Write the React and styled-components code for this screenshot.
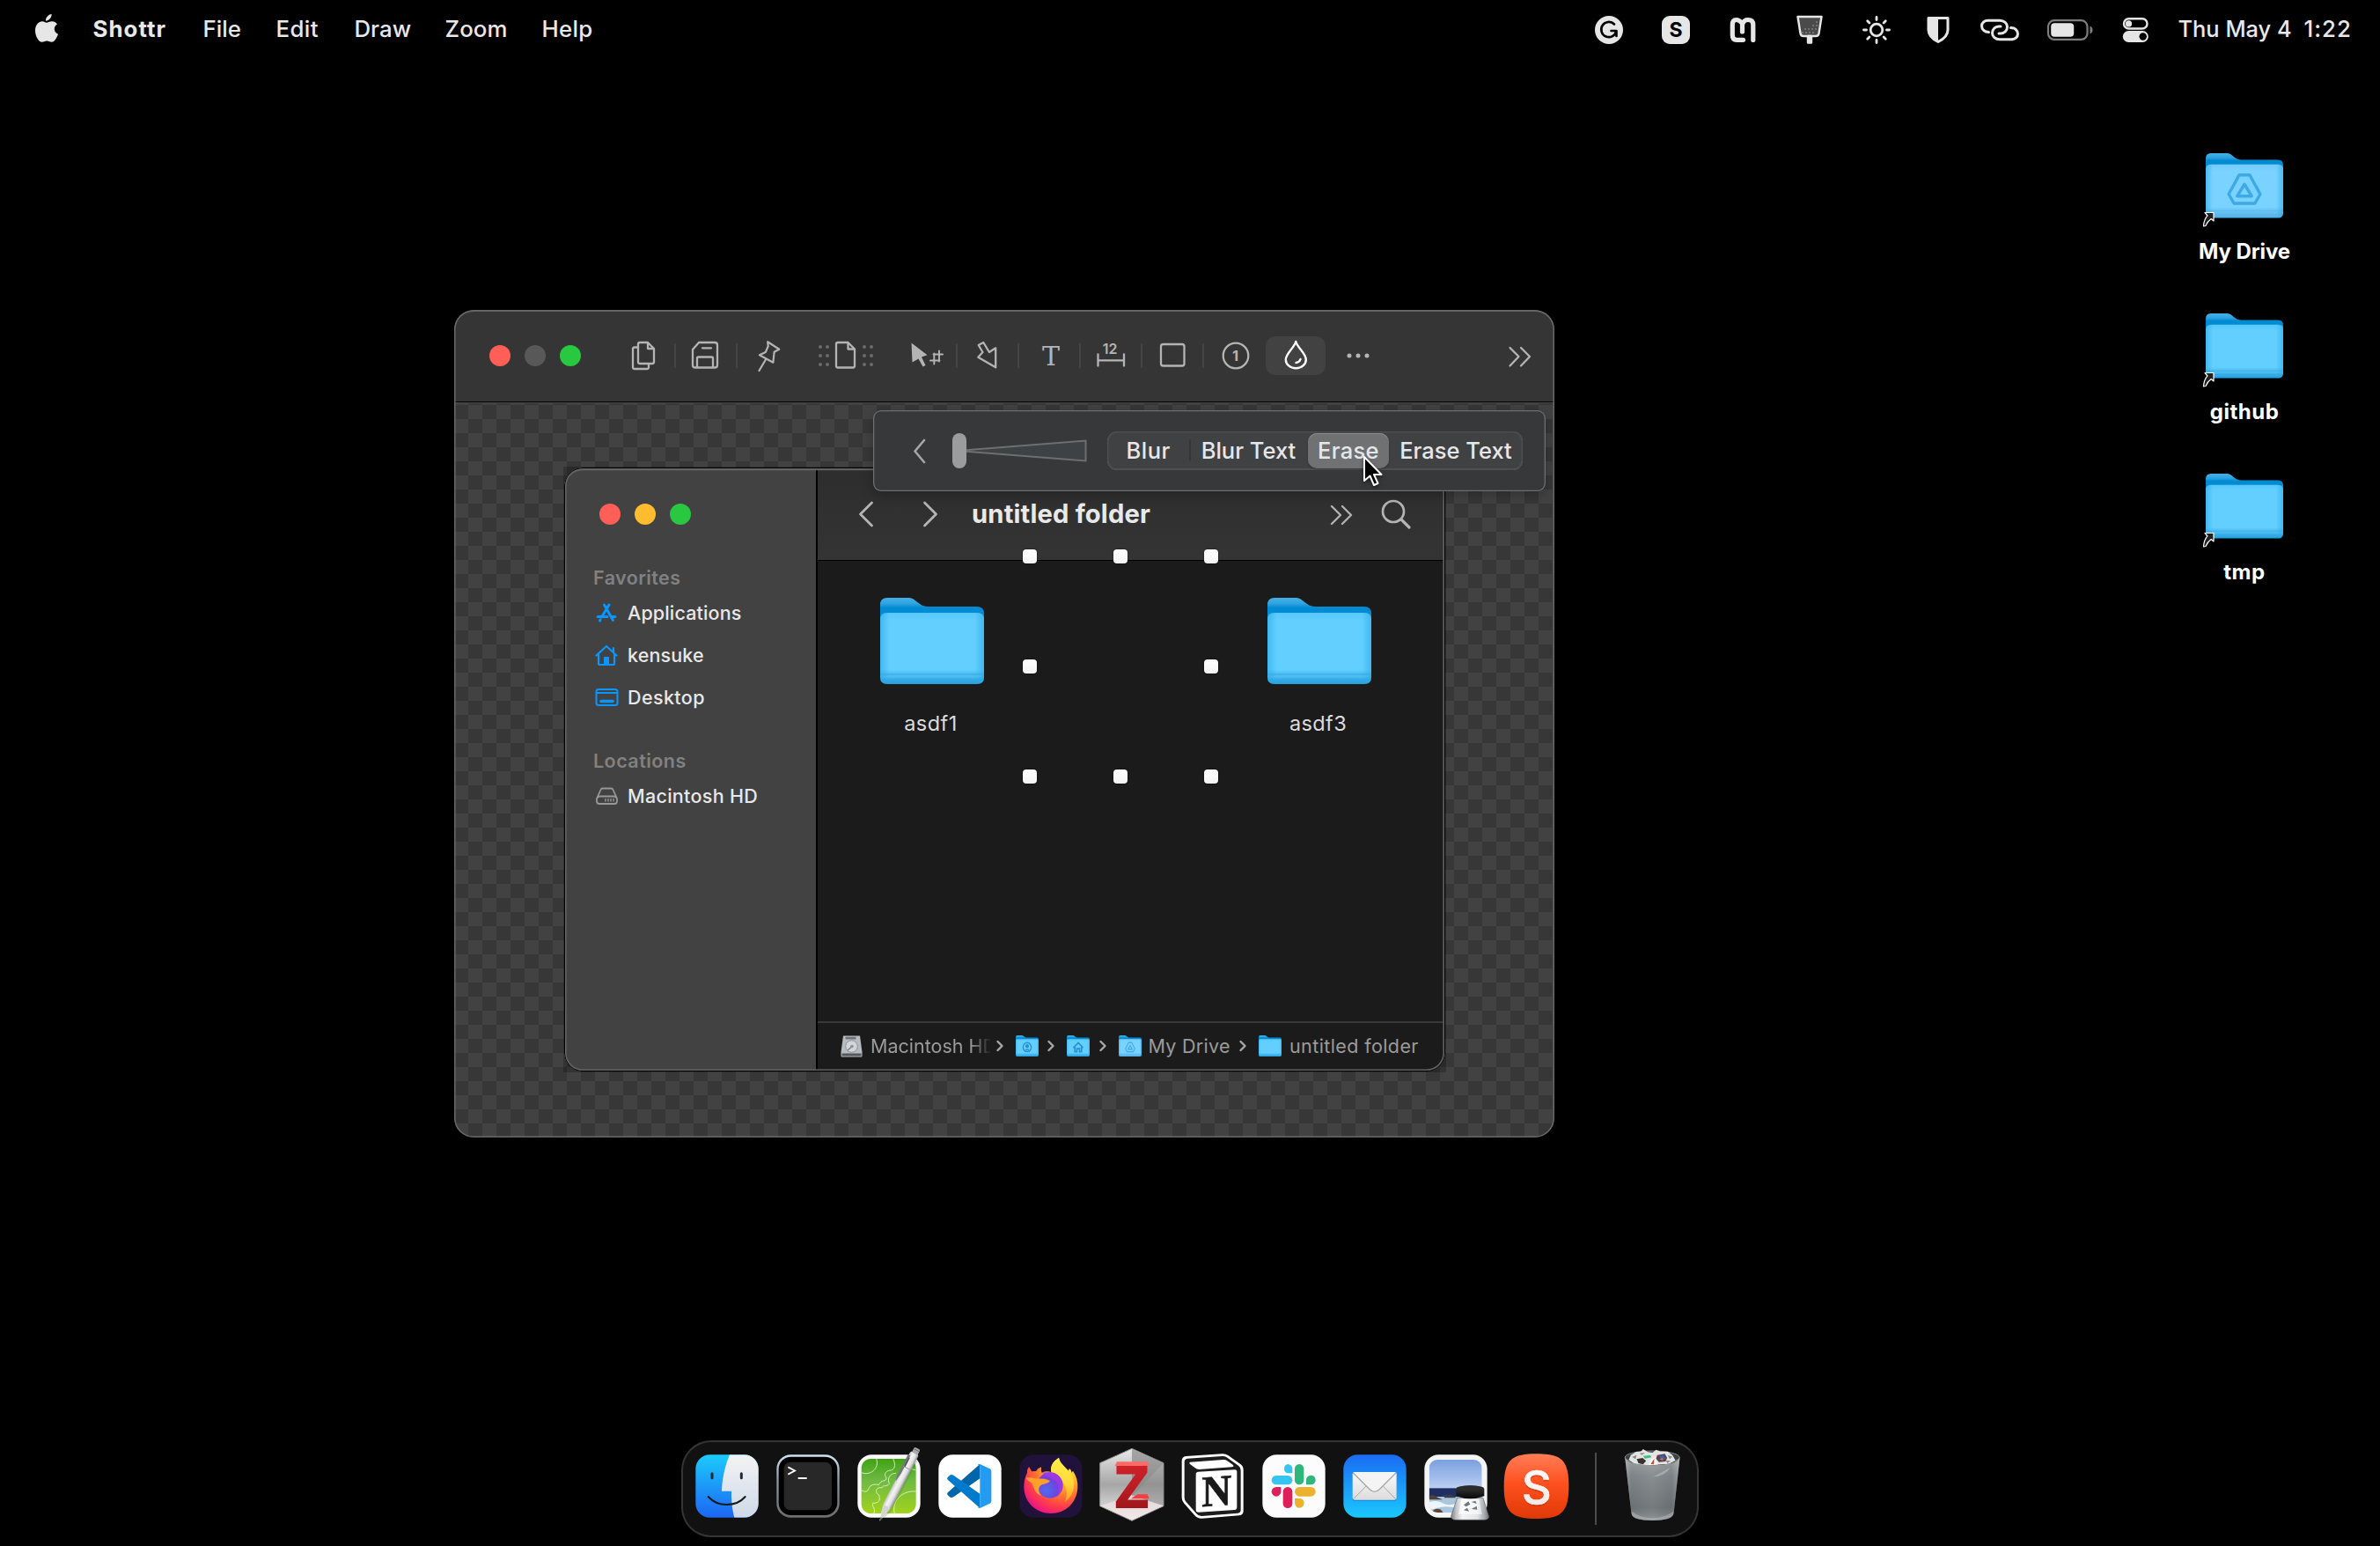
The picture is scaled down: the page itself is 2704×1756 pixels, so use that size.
import React from "react";
import styled, { createGlobalStyle, css } from "styled-components";

const Global = createGlobalStyle`
  * { box-sizing: border-box; }
  html, body { margin: 0; background: #000; }
  body { font-family: Inter, "Liberation Sans", sans-serif; overflow: hidden; }
  svg { display: block; flex: none; overflow: visible; }
`;

/* ---------- shared ---------- */

const Text = styled.span`
  display: block;
  flex: none;
  white-space: nowrap;
  color: ${(p) => p.$color || "#e8e8e8"};
  font-size: ${(p) => p.$size || 25.8}px;
  font-weight: ${(p) => p.$weight || 400};
  letter-spacing: ${(p) => p.$ls || 0}px;
`;

const Icon = styled.svg`
  width: ${(p) => p.$w || 40}px;
  height: ${(p) => p.$h || 40}px;
  margin-left: ${(p) => p.$ml || 0}px;
  fill: none;
  stroke: ${(p) => p.$c || "#b4b4b4"};
  stroke-width: ${(p) => p.$sw || 2.3};
  stroke-linecap: round;
  stroke-linejoin: round;
  text { stroke: none; fill: ${(p) => p.$c || "#b4b4b4"}; font-family: Inter, sans-serif; }
`;

const Light = styled.span`
  width: 24px;
  height: 24px;
  border-radius: 50%;
  background: ${(p) => p.$c};
`;

const Lights = styled.div`
  display: flex;
  gap: 16px;
`;

/* ---------- folder drawing ---------- */

const Folder = ({ w = 118, h = 98, emblem, id, light }) => (
  <svg width={w} height={h} viewBox="0 0 118 98" preserveAspectRatio="none">
    <defs>
      <linearGradient id={`b${id}`} x1="0" y1="0" x2="0" y2="1">
        <stop offset="0" stopColor="#45b0e8" />
        <stop offset="0.11" stopColor="#2fa3e0" />
        <stop offset="0.19" stopColor="#008ad2" />
        <stop offset="1" stopColor="#1a9de0" />
      </linearGradient>
      <linearGradient id={`f${id}`} x1="0" y1="0" x2="0" y2="1">
        <stop offset="0" stopColor={light ? "#74cbf9" : "#58c8fb"} />
        <stop offset="0.12" stopColor={light ? "#79d2ff" : "#62cfff"} />
        <stop offset="0.8" stopColor={light ? "#79d2ff" : "#62cfff"} />
        <stop offset="0.85" stopColor={light ? "#6cc6f5" : "#4fbff3"} />
        <stop offset="0.86" stopColor={light ? "#5fb9ec" : "#3fb2ea"} />
        <stop offset="0.89" stopColor={light ? "#6cc4f3" : "#52bff1"} />
        <stop offset="0.93" stopColor={light ? "#5cb9ee" : "#36ade8"} />
        <stop offset="1" stopColor={light ? "#52b3ea" : "#22a1e0"} />
      </linearGradient>
      <linearGradient id={`e${id}`} x1="0" y1="0" x2="1" y2="0">
        <stop offset="0" stopColor="#2ba9e6" stopOpacity="0.6" />
        <stop offset="0.09" stopColor="#2ba9e6" stopOpacity="0" />
        <stop offset="0.91" stopColor="#2ba9e6" stopOpacity="0" />
        <stop offset="1" stopColor="#2ba9e6" stopOpacity="0.6" />
      </linearGradient>
    </defs>
    <path d="M0 8Q0 0 8 0H33C40 0 44 10 54 10H110Q118 10 118 18V60H0Z" fill={`url(#b${id})`} />
    <path d="M0 25Q0 17 8 17H110Q118 17 118 25V90Q118 98 110 98H8Q0 98 0 90Z" fill={`url(#f${id})`} />
    <path d="M0 25Q0 17 8 17H110Q118 17 118 25V90Q118 98 110 98H8Q0 98 0 90Z" fill={`url(#e${id})`} />
    {emblem === "drive" && (
      <g fill="none" stroke="#3ea9e3" strokeWidth="4.6" strokeLinejoin="round">
        <path d="M51 33H67L83 62L75 76H43L35 62Z" />
        <path d="M59 47L70 65H48Z" />
      </g>
    )}
    {emblem === "person" && (
      <g fill="none" stroke="#2a8fcb" strokeWidth="6">
        <circle cx="59" cy="55" r="21" />
        <circle cx="59" cy="50" r="6" fill="#2a8fcb" />
        <path d="M50 67H68" />
      </g>
    )}
    {emblem === "home" && (
      <g fill="none" stroke="#2a8fcb" strokeWidth="7">
        <path d="M34 58L59 34L84 58M42 54V76H52V62H66V76H76V54" />
      </g>
    )}
  </svg>
);

/* ---------- menu bar ---------- */

const MenuBar = styled.header`
  display: flex;
  align-items: center;
  height: 68px;
  padding: 0 32px 0 38px;
`;

const MenuItem = styled(Text)`
  width: ${(p) => p.$w}px;
  padding-bottom: 3px;
`;

const Gap = styled.i`
  flex: none;
  width: ${(p) => p.$w}px;
`;

const Status = styled.div`
  display: flex;
  align-items: center;
  margin-left: auto;
`;

const W = "#e6e6e6";
const S = (p) => <Icon $w={44} $h={40} viewBox="0 0 44 40" $c={W} $sw={2.6} {...p} />;

const MENUS = [
  ["Shottr", 125, 700, 1.05],
  ["File", 83, 500, 0],
  ["Edit", 89, 500, 0.4],
  ["Draw", 103, 500, 0],
  ["Zoom", 110, 500, 0.1],
  ["Help", 70, 500, 0.3],
];

const TopBar = () => (
  <MenuBar>
    <Icon $w={30} $h={40} viewBox="0 0 30 40" $c="none">
      <path
        fill={W}
        d="M20.6 2C20.8 6 17.500 9.700 14 9.700C13.600 6.200 17 2.300 20.600 2ZM14.800 11.800C16.300 11.800 18.300 10.300 21 10.300C23.500 10.300 25.600 11.500 26.900 13.400C22.200 16.300 23 22.700 28 24.700C27 28 24 33.800 20.800 33.800C18.800 33.800 17.800 32.500 15.300 32.500C12.700 32.500 11.700 33.800 9.700 33.800C5.800 33.800 2 26.700 2 20.700C2 14 6.200 10.300 10 10.300C12 10.300 13.600 11.800 14.800 11.800Z"
      />
    </Icon>
    <Gap $w={37.5} />
    {MENUS.map(([t, w, wt, ls]) => (
      <MenuItem key={t} $w={w} $weight={wt} $ls={ls}>
        {t}
      </MenuItem>
    ))}
    <Status>
      <S>
        <circle cx="22" cy="20" r="16" fill={W} stroke="none" />
        <path d="M28 13.500A8.600 8.600 0 1 0 30.300 21H24.500M30.500 21V27" stroke="#000" />
      </S>
      <S $ml={32}>
        <rect x="6" y="4" width="32" height="32" rx="9" fill={W} stroke="none" />
        <text x="22" y="28" fontSize="23" fontWeight="700" textAnchor="middle" style={{ fill: "#000" }}>
          S
        </text>
      </S>
      <S $ml={32} $sw={5.2}>
        <path d="M22.500 31.300H15Q10.300 31.300 10.300 26V14Q10.300 8.500 14.500 8.500Q18 8.500 21.500 12.500V22M22 12.500Q23.500 8.500 28 8.500Q33.800 8.500 33.800 14V31.500" />
      </S>
      <S $ml={32} $sw={2.4}>
        <path d="M8.500 5H35.500L32.500 24Q32 27 29 27H15Q12 27 11.500 24Z" fill="#4a4a4a" />
        <path d="M20 27H24V34.500H20Z" fill={W} />
        <path d="M14 23h.1M18 23h.1M22 23h.1M26 23h.1M17 19h.1M21 19h.1M25 19h.1M29 19h.1M26 15h.1M30 15h.1M30 11h.1" stroke="#a8a8a8" strokeWidth="1.500" />
      </S>
      <S $ml={32} $sw={2.8}>
        <circle cx="22" cy="20" r="6.800" />
        <path d="M22 5.500V8.500M22 31.500V34.500M7.500 20H10.500M33.500 20H36.500M11.700 9.700L13.900 11.900M30.100 28.100L32.300 30.300M11.700 30.300L13.900 28.100M30.100 11.900L32.300 9.700" />
      </S>
      <S $ml={26} $sw={3}>
        <path d="M11 6.500H33V20Q33 28 22 33.500Q11 28 11 20Z" />
        <path d="M11 6.500H22V33.500Q11 28 11 20Z" fill={W} stroke="none" />
      </S>
      <S $ml={26} $sw={3}>
        <path d="M9.500 22.500C4.500 22.500 1.500 19 1.500 15.500C1.500 12 4.500 9.200 8.500 9.200H22C27 9.200 30.500 12.500 30.500 16.500C30.500 20.500 27.500 24 23 24H21" />
        <path d="M34.500 17.500C39.500 17.500 42.500 21 42.500 24.500C42.500 28 39.500 30.800 35.500 30.800H22C17 30.800 13.500 27.500 13.500 23.500C13.500 19.500 16.500 16 21 16H23" />
      </S>
      <Icon $w={54} $ml={31} viewBox="0 0 54 40" $c="#7d7d7d" $sw={2.2}>
        <rect x="2" y="9.200" width="44.500" height="21.700" rx="7" />
        <rect x="5.200" y="12.300" width="26" height="15.500" rx="4" fill={W} stroke="none" />
        <path d="M49.500 15.500Q52.500 17 52.500 20T49.500 24.500Z" fill="#7d7d7d" stroke="none" />
      </Icon>
      <S $ml={25} $sw={2.4}>
        <rect x="9" y="7.300" width="26.500" height="11.200" rx="5.600" />
        <circle cx="14.500" cy="12.900" r="3.600" fill={W} stroke="none" />
        <rect x="7.800" y="21" width="29" height="13" rx="6.500" fill={W} stroke="none" />
        <circle cx="30.700" cy="27.500" r="4.200" fill="#000" stroke="none" />
      </S>
      <Gap $w={26.5} />
      <MenuItem $w={143} $size={25.4} $weight={500}>
        Thu May 4
      </MenuItem>
      <MenuItem $w={54.5} $size={25.8} $ls={1} $weight={500}>
        1:22
      </MenuItem>
    </Status>
  </MenuBar>
);

/* ---------- desktop ---------- */

const Desktop = styled.div`
  position: relative;
  width: 2704px;
  height: 1756px;
  overflow: hidden;
  background: #000;
  display: flex;
  flex-direction: column;
`;

const Shortcuts = styled.div`
  display: flex;
  flex-direction: column;
  align-self: flex-end;
  width: 180px;
  margin: 105.500px 64px 0 0;
`;

const Shortcut = styled.div`
  position: relative;
  height: 182px;
  display: flex;
  flex-direction: column;
  align-items: center;
  gap: 22.500px;
`;

const AliasBadge = styled.svg`
  position: absolute;
  left: 42px;
  top: 66px;
`;

const ShortcutLabel = styled(Text)`
  line-height: 32px;
  color: #fff;
`;

const SHORTCUTS = [
  ["My Drive", "drive", -0.1],
  ["github", null, 0.5],
  ["tmp", null, 0.5],
];

/* ---------- editor window ---------- */

const Editor = styled.section`
  position: absolute;
  left: 516px;
  top: 352px;
  width: 1250px;
  height: 940px;
  border-radius: 22px;
  overflow: hidden;
  display: flex;
  flex-direction: column;
  &::after {
    content: "";
    position: absolute;
    inset: 0;
    border-radius: 22px;
    box-shadow: inset 0 0 0 1.500px #696969, inset 0 1px 0 1px rgba(130, 130, 130, 0.5);
    pointer-events: none;
  }
`;

const Toolbar = styled.div`
  flex: none;
  height: 105px;
  padding: 0 19px 1px 40px;
  display: flex;
  align-items: center;
  background: #353535;
  border-bottom: 1px solid #000;
`;

const Sep = styled.i`
  flex: none;
  width: 2px;
  height: 28px;
  margin-left: ${(p) => p.$ml}px;
  background: #444;
`;

const ActiveTool = styled.div`
  flex: none;
  width: 68px;
  height: 44px;
  margin-left: 14px;
  border-radius: 11px;
  background: #424242;
  display: flex;
  align-items: center;
  justify-content: center;
`;

const Spring = styled.div`
  flex: 1;
`;

const Canvas = styled.div`
  flex: 1;
  padding: 72px 0 0 124px;
  border-top: 1px solid #4a4a4a;
  background: conic-gradient(#424242 25%, #373737 0 50%, #424242 0 75%, #373737 0) 0 2px / 32px 32px;
`;

const Popover = styled.div`
  position: absolute;
  left: 476px;
  top: 114px;
  width: 764px;
  height: 92px;
  padding: 0 26px 0 42px;
  border-radius: 9px;
  background: #37383a;
  box-shadow: inset 0 0 0 1.300px #6c6e70, 0 4px 14px rgba(0, 0, 0, 0.25);
  display: flex;
  align-items: center;
`;

const Segments = styled.div`
  display: flex;
  align-items: center;
  width: 472px;
  height: 44px;
  margin-left: 22px;
  border-radius: 11px;
  background: #404143;
  box-shadow: inset 0 0 0 1.500px #4d4e50, inset 0 -1px 0 0.500px #6a6b6d;
`;

const Segment = styled.div`
  width: ${(p) => p.$w}px;
  height: 40px;
  padding-bottom: 2px;
  border-radius: 10px;
  display: flex;
  align-items: center;
  justify-content: center;
  ${(p) => p.$on && css`
    background: #707173;
    box-shadow: inset 0 1px 0 #8b8c8e, 0 1px 2px rgba(0, 0, 0, 0.3);
  `}
  ${(p) => p.$rule && css`
    justify-content: space-between;
    padding-left: 21.500px;
    &::after {
      content: "";
      width: 2px;
      height: 24px;
      margin-right: -2px;
      background: #353638;
    }
  `}
`;

const Pointer = styled.svg`
  position: absolute;
  left: 1032px;
  top: 164px;
  filter: drop-shadow(0 2px 2px rgba(0, 0, 0, 0.5));
`;

const SEGMENTS = [
  ["Blur", 93, false, true, 0.5],
  ["Blur Text", 135, false, false, 0],
  ["Erase", 92, true, false, 0.3],
  ["Erase Text", 152, false, false, 0],
];

/* ---------- captured finder window ---------- */

const Capture = styled.div`
  width: 1003px;
  height: 688px;
  padding: 1px;
  background: rgba(0, 0, 0, 0.22);
`;

const Finder = styled.div`
  position: relative;
  width: 1001px;
  height: 686px;
  border-radius: 21px;
  overflow: hidden;
  display: flex;
  background: #1b1b1b;
  &::after {
    content: "";
    position: absolute;
    inset: 0;
    border-radius: 21px;
    box-shadow: inset 0 0 0 1px #000, inset 0 0 0 2.600px #636363, inset 0 2px 0 1.200px rgba(128, 128, 128, 0.6);
    pointer-events: none;
  }
`;

const Sidebar = styled.aside`
  flex: none;
  width: 288px;
  padding: 41px 0 0 33px;
  background: #424242;
  border-right: 2px solid #000;
  ${Lights} { margin: 0 0 46px 7px; }
`;

const SideHead = styled(Text)`
  height: 30px;
  line-height: 28px;
  margin-top: ${(p) => p.$mt || 0}px;
`;

const SideRow = styled.div`
  display: flex;
  align-items: center;
  height: 48px;
  gap: 10px;
  padding-left: 1px;
`;

const Main = styled.div`
  flex: 1;
  display: flex;
  flex-direction: column;
`;

const FinderBar = styled.div`
  flex: none;
  height: 106px;
  padding: 0 36px 0 45px;
  display: flex;
  align-items: center;
  background: linear-gradient(#2d2d2d, #343434);
  border-bottom: 1px solid #000;
`;

const Files = styled.div`
  position: relative;
  flex: 1;
  display: grid;
  grid-template-columns: repeat(3, 220px);
  align-content: start;
  padding: 42px 0 0 20px;
`;

const File = styled.div`
  grid-column: ${(p) => p.$col};
  display: flex;
  flex-direction: column;
  align-items: center;
  gap: 30px;
`;

const FileName = styled(Text)`
  padding-right: 3px;
`;

const Handle = styled.i`
  position: absolute;
  left: ${(p) => 233 + p.$c * 103}px;
  top: ${(p) => p.$r * 125 - 13}px;
  width: 16px;
  height: 16px;
  border-radius: 4px;
  background: linear-gradient(#fff, #f4f4f4);
  box-shadow: 0 0 2px rgba(0, 0, 0, 0.8);
`;

const PathBar = styled.div`
  flex: none;
  display: flex;
  align-items: center;
  height: 57px;
  padding: 0 0 3px 26px;
  border-top: 2px solid #393939;
`;

const Crumb = styled(Text)`
  margin-left: ${(p) => p.$ml || 9}px;
  width: ${(p) => p.$w}px;
  ${(p) => p.$fade && css`
    overflow: hidden;
    mask-image: linear-gradient(90deg, #000 82%, transparent 99%);
  `}
`;

const CrumbFolder = styled.div`
  margin-left: 14px;
`;

const CrumbArrow = ({ ml }) => (
  <Icon $w={8} $h={12} $ml={ml} viewBox="0 0 8 12" $c="#a8a8a8" $sw={2.4}>
    <path d="M1.500 1L6.500 6L1.500 11" />
  </Icon>
);

const BLUE = "#0a95ff";
const HANDLES = [[0, 0], [1, 0], [2, 0], [0, 1], [2, 1], [0, 2], [1, 2], [2, 2]];

const FinderWindow = () => (
  <Capture>
    <Finder>
      <Sidebar>
        <Lights>
          <Light $c="#ff5f57" />
          <Light $c="#febc2e" />
          <Light $c="#28c840" />
        </Lights>
        <SideHead $size={21.5} $weight={600} $ls={0.4} $color="#818181">Favorites</SideHead>
        <SideRow>
          <Icon $w={28} $h={24} viewBox="0 0 28 24" $c={BLUE} $sw={3}>
            <path d="M17 3L8.500 17M11.500 3L21.500 20.500M4 16.500H15M20 16.500H24M7 20L6.500 21" />
          </Icon>
          <Text $size={21.5} $weight={500} $ls={0.15}>Applications</Text>
        </SideRow>
        <SideRow>
          <Icon $w={28} $h={24} viewBox="0 0 28 24" $c={BLUE} $sw={2.200}>
            <path d="M2.500 12.500L14 2L25.500 12.500M5 11V21.500Q5 23 6.500 23H21.500Q23 23 23 21.500V11M22 9V4" />
            <path d="M11 14H17V23H11Z" fill={BLUE} stroke="none" />
          </Icon>
          <Text $size={21.5} $weight={500} $ls={0.15}>kensuke</Text>
        </SideRow>
        <SideRow>
          <Icon $w={28} $h={24} viewBox="0 0 28 24" $c={BLUE} $sw={2}>
            <rect x="2.500" y="3" width="24" height="18" rx="2.500" />
            <path d="M3 7H26" />
            <path d="M8 16.500H21" strokeWidth="3.600" />
          </Icon>
          <Text $size={21.5} $weight={500} $ls={0.4}>Desktop</Text>
        </SideRow>
        <SideHead $size={21.5} $weight={600} $ls={0.45} $color="#818181" $mt={34}>Locations</SideHead>
        <SideRow>
          <Icon $w={28} $h={24} viewBox="0 0 28 24" $c="#989898" $sw={1.800}>
            <path d="M7.500 5Q8 3.500 9.500 3.500H19.500Q21 3.500 21.500 5L26 15V18Q26 21 23 21H6Q3 21 3 18V15ZM3.500 14.500Q4 12.500 7 12.500H22Q25 12.500 25.500 14.500" />
            <path d="M13 15.500V18M16 15.500V18M19 15.500V18M22 15.500V18" strokeWidth="1.400" />
          </Icon>
          <Text $size={21.5} $weight={500} $ls={0.3}>Macintosh HD</Text>
        </SideRow>
      </Sidebar>
      <Main>
        <FinderBar>
          <Icon $w={20} viewBox="0 0 20 40" $sw={2.800}>
            <path d="M16.500 7L3.500 20L16.500 33" />
          </Icon>
          <Icon $w={20} $ml={53} viewBox="0 0 20 40" $sw={2.800}>
            <path d="M3.500 7L16.500 20L3.500 33" />
          </Icon>
          <Gap $w={37} />
          <Text $size={29.2} $weight={700} $ls={0.15} $color="#e9e9e9">untitled folder</Text>
          <Spring />
          <Icon viewBox="0 0 40 40">
            <path d="M9 11L19 21L9 31M21 11L31 21L21 31" />
          </Icon>
          <Icon $ml={22} viewBox="0 0 40 40" $sw={2.700}>
            <circle cx="17" cy="17" r="12" />
            <path d="M26 26L35 35" strokeWidth="3.200" />
          </Icon>
        </FinderBar>
        <Files>
          <File $col={1}>
            <Folder id="a1" />
            <FileName $size={23.5} $ls={0.5} $color="#dcdcdc">asdf1</FileName>
          </File>
          <File $col={3}>
            <Folder id="a3" />
            <FileName $size={23.5} $ls={0.4} $color="#dcdcdc">asdf3</FileName>
          </File>
          {HANDLES.map(([c, r]) => (
            <Handle key={`${c}${r}`} $c={c} $r={r} />
          ))}
        </Files>
        <PathBar>
          <svg width="25" height="25" viewBox="0 0 25 25">
            <path d="M3 0.500H22L24.500 19V23.500Q24.500 24.500 23.500 24.500H1.500Q.500 24.500 .500 23.500V19Z" fill="#b7bcc0" />
            <path d="M1.500 20.500H23.500V23.500H1.500Z" fill="#55595c" />
            <circle cx="12.500" cy="12.500" r="6.800" fill="#d3d6d8" stroke="#8f9498" />
            <path d="M8 17L12.500 13" stroke="#7e8387" strokeWidth="1.500" />
            <circle cx="13" cy="12.500" r="1.800" fill="#8d9296" />
            <rect x="5.500" y="1.800" width="12" height="2.600" fill="#6d7276" />
          </svg>
          <Crumb $size={21.5} $color="#9b9b9b" $w={139} $fade>Macintosh HD</Crumb>
          <CrumbArrow ml={4} />
          <CrumbFolder><Folder w={26} h={24} id="p1" emblem="person" /></CrumbFolder>
          <CrumbArrow ml={10} />
          <CrumbFolder><Folder w={26} h={24} id="p2" emblem="home" /></CrumbFolder>
          <CrumbArrow ml={10.5} />
          <CrumbFolder><Folder w={26} h={24} id="p3" emblem="drive" light /></CrumbFolder>
          <Crumb $ml={8} $size={21.5} $color="#9b9b9b" $ls={0.3} $w={94}>My Drive</Crumb>
          <CrumbArrow ml={9.5} />
          <CrumbFolder><Folder w={26} h={24} id="p4" /></CrumbFolder>
          <Crumb $size={21.5} $color="#9b9b9b" $ls={0.4} $w={150}>untitled folder</Crumb>
        </PathBar>
      </Main>
    </Finder>
  </Capture>
);

const T = (p) => <Icon viewBox="0 0 40 40" {...p} />;

const EditorWindow = () => (
  <Editor>
    <Toolbar>
      <Lights>
        <Light $c="#ff5f57" />
        <Light $c="#585858" />
        <Light $c="#28c840" />
      </Lights>
      <T $ml={51}>
        <path d="M16 5H25L32 12V27Q32 29 30 29H16Q14 29 14 27V7Q14 5 16 5ZM25 5V12H32M14 10.500H10Q8 10.500 8 12.500V33Q8 35 10 35H24Q26 35 26 33V29" />
      </T>
      <Sep $ml={15} />
      <T $ml={13}>
        <path d="M13 5H31Q34 5 34 8V31Q34 33.500 31 33.500H9Q6 33.500 6 31V13ZM17 11.300H27M11 33V23Q11 21.500 12.500 21.500H27.500Q29 21.500 29 23V33" />
      </T>
      <Sep $ml={15} />
      <T $ml={16} $sw={2.200}>
        <path d="M18.200 4.300L31.300 12.700L25.600 15.800L24.400 27.700L8.900 19.300L15.800 16L18.700 9.300ZM16.200 24L8.500 37" />
      </T>
      <T $w={70} $ml={32} viewBox="0 0 70 40">
        <path d="M26 5H37.500L45 12.500V31.500Q45 33.500 43 33.500H26Q24 33.500 24 31.500V7Q24 5 26 5ZM37.500 5V12.500H45" />
        <path d="M6 10h.01M14 10h.01M6 20h.01M14 20h.01M6 30h.01M14 30h.01M56 10h.01M64 10h.01M56 20h.01M64 20h.01M56 30h.01M64 30h.01" stroke="#6a6a6a" strokeWidth="4.200" />
      </T>
      <T $ml={37} $sw={1.9}>
        <path d="M2.500 5.500L20.500 19.300L14 21.500L18.500 31L15.500 32.500L10.500 23.500L3.500 27.500Z" fill="#b4b4b4" stroke="none" />
        <path d="M28.300 17.500V29.500M34 14.500V26.500M24 25.500H34.500M27.500 18.500H38" />
      </T>
      <Sep $ml={13} />
      <T $ml={13}>
        <path d="M16.300 5L10.700 8L15.500 16L10.300 21.700L30.200 33.300V11.300L22.900 16Z" />
      </T>
      <Sep $ml={15} />
      <T $ml={16}>
        <text x="20" y="30.500" fontSize="30" textAnchor="middle" style={{ fontFamily: '"DejaVu Serif", serif' }}>T</text>
      </T>
      <Sep $ml={12} />
      <T $ml={14}>
        <path d="M5.500 18.500V31.500M35 18.500V31.500M5.500 25.300H35" />
        <text x="19" y="17.500" fontSize="16" fontWeight="600" textAnchor="middle">12</text>
      </T>
      <Sep $ml={14} />
      <T $ml={14}>
        <rect x="7" y="7" width="26.500" height="24.500" rx="2.500" />
      </T>
      <Sep $ml={14} />
      <T $ml={16}>
        <circle cx="20" cy="20" r="14.300" />
        <text x="19.500" y="26" fontSize="16.500" fontWeight="700" textAnchor="middle">1</text>
      </T>
      <ActiveTool>
        <T $c="#fff" $sw={2.400}>
          <path d="M20.300 4C18.500 11 8.800 17.500 8.800 24.500A11.500 9.800 0 0 0 31.800 24.500C31.800 17.500 22 11 20.300 4ZM25.500 24Q24.500 27.500 20.500 28" />
        </T>
      </ActiveTool>
      <T $ml={16.5} $sw={5}>
        <path d="M10 20h.01M20 20h.01M30 20h.01" />
      </T>
      <Spring />
      <T>
        <path d="M8.500 11L18.500 21L8.500 31.500M21 11L31 21L21 31.500" />
      </T>
    </Toolbar>
    <Canvas>
      <FinderWindow />
    </Canvas>
    <Popover>
      <Icon $w={20} $ml={0.5} viewBox="0 0 20 40" $c="#a5a6a8" $sw={2.600}>
        <path d="M15 8L4.500 20.500L15 33" />
      </Icon>
      <Icon $w={154} $ml={27.5} viewBox="0 0 154 40" $c="#6d6f71" $sw={2}>
        <path d="M6 20L151.500 8.500V31.500Z" fill="#3d4245" strokeLinejoin="miter" />
        <rect x="0" y="0" width="16" height="40" rx="8" fill="#9b9c9e" stroke="none" />
      </Icon>
      <Segments>
        {SEGMENTS.map(([t, w, on, rule, ls]) => (
          <Segment key={t} $w={w} $on={on} $rule={rule}>
            <Text $size={25.5} $weight={500} $ls={ls} $color="#e6e7e8">{t}</Text>
          </Segment>
        ))}
      </Segments>
    </Popover>
    <Pointer width="26" height="40" viewBox="0 0 26 40">
      <path d="M2 3V30L8.500 24.500L13 35L17.500 33L13 23H21.500Z" fill="#000" stroke="#fff" strokeWidth="2" strokeLinejoin="round" />
    </Pointer>
  </Editor>
);

/* ---------- dock ---------- */

const DockBar = styled.nav`
  display: flex;
  align-self: center;
  align-items: center;
  width: 1156px;
  height: 110px;
  margin: auto 0 10px;
  padding-left: 6px;
  border-radius: 34px;
  background: #111;
  box-shadow: inset 0 0 0 2px #353535;
`;

const DockRule = styled.i`
  width: 2px;
  height: 82px;
  margin: 0 17px 0 20px;
  background: #4c4c4c;
`;

const DockIcon = ({ x, children }) => (
  <svg width="92" height="110" viewBox={`${x} 48 276 330`}>{children}</svg>
);

const Tile = ({ x, fill, ...p }) => <rect x={x + 31} y="97" width="214" height="214" rx="48" fill={fill} {...p} />;

const Grad = ({ id, stops, x2 = 0, y2 = 1 }) => (
  <linearGradient id={id} x1="0" y1="0" x2={x2} y2={y2}>
    {stops.map(([o, c]) => <stop key={o} offset={o} stopColor={c} />)}
  </linearGradient>
);

const Dock = () => (
  <DockBar>
    <DockIcon x={31}>
      <defs>
        <Grad id="fb" stops={[[0, "#1ccbfc"], [1, "#1c66f4"]]} />
        <Grad id="fw" stops={[[0, "#f3f3f4"], [1, "#cfd9e8"]]} />
        <clipPath id="fc"><Tile x={31} /></clipPath>
      </defs>
      <Tile x={31} fill="url(#fb)" />
      <path clipPath="url(#fc)" d="M178 97C160 140 152 185 151 221H184C183 255 188 290 194 311H280V97Z" fill="url(#fw)" />
      <path d="M118 161V176M218 161V176" stroke="#222b33" strokeWidth="9" strokeLinecap="round" />
      <path d="M105 240C137 276 200 276 231 240" stroke="#171a1d" strokeWidth="6" fill="none" strokeLinecap="round" />
    </DockIcon>
    <DockIcon x={307}>
      <defs><Grad id="tb" stops={[[0, "#cfe3f0"], [0.4, "#8d9aa3"], [1, "#6d6d6d"]]} /></defs>
      <Tile x={307} fill="url(#tb)" />
      <rect x="345" y="104" width="200" height="199" rx="42" fill="#000" />
      <rect x="363" y="122" width="163" height="164" rx="22" fill="#282828" />
      <path d="M377 139L400 151.500L377 164" fill="none" stroke="#fff" strokeWidth="5.500" />
      <rect x="411" y="174" width="30" height="6" fill="#fff" />
    </DockIcon>
    <DockIcon x={583}>
      <defs>
        <Grad id="cg" stops={[[0, "#3fa212"], [0.4, "#6fba43"], [1, "#a2d31d"]]} />
        <Grad id="pen" x2={1} y2={0} stops={[[0, "#c3c4c5"], [0.35, "#f4f4f4"], [0.7, "#dedfe0"], [1, "#8f9091"]]} />
      </defs>
      <Tile x={583} fill="#fbfbfb" />
      <rect x="627" y="111" width="186" height="186" rx="32" fill="url(#cg)" />
      <g fill="none" stroke="#e8f7d8" strokeWidth="2.500">
        <path d="M627 158C655 170 690 145 678 111M627 218C640 225 648 225 652 212C656 200 672 195 686 200C694 180 714 190 712 176C700 160 715 150 728 150C745 145 742 125 735 111" />
        <path d="M668 297C680 285 660 272 666 262C690 262 690 250 688 236C668 222 680 205 697 210C700 198 714 208 722 196C715 180 722 160 745 160M740 297C730 260 760 218 813 222M813 150C790 140 780 150 772 165" />
      </g>
      <g transform="rotate(27.500 752 200)">
        <path d="M768 95V285L753 340L773 292V100Z" fill="#3c7a10" opacity="0.25" />
        <path d="M737 84Q737 76 745 76H760Q768 76 768 84V282L753 338L737 282Z" fill="url(#pen)" />
        <path d="M740 282H765L753 338Z" fill="#d2d3d4" />
        <path d="M750 325H756L753 341Z" fill="#555" />
        <rect x="742" y="59" width="22" height="20" rx="5" fill="#a9aaab" />
        <path d="M744 66H762" stroke="#6d6e70" strokeWidth="3" />
        <path d="M734 92H743V160L739 192Q733 180 734 160Z" fill="#77787a" />
        <path d="M743 100V135" stroke="#55565a" strokeWidth="5" />
        <path d="M737 135H768" stroke="#9a9b9c" strokeWidth="3" />
      </g>
    </DockIcon>
    <DockIcon x={859}>
      <Tile x={859} fill="#fff" />
      <path d="M1031 129V178L941 241Q933 246 927 240L921 234Q917 229 922 225Z" fill="#0065a9" />
      <path d="M1031 279V230L941 167Q933 162 927 168L921 174Q917 179 922 183Z" fill="#007acc" />
      <path d="M1031 129L1065 145Q1070 148 1070 153V255Q1070 260 1065 263L1031 279Q1026 279 1022 275Q1031 279 1031 270V138Q1031 129 1022 133Q1026 128 1031 129Z" fill="#229bf0" />
    </DockIcon>
    <DockIcon x={-65}>
      <defs>
        <radialGradient id="fx" cx="0.75" cy="0.15" r="0.95">
          <stop offset="0" stopColor="#fff44f" />
          <stop offset="0.3" stopColor="#ffc22c" />
          <stop offset="0.55" stopColor="#ff7a2a" />
          <stop offset="0.78" stopColor="#ff3a4d" />
          <stop offset="1" stopColor="#e8108a" />
        </radialGradient>
        <radialGradient id="fg" cx="0.35" cy="0.7" r="0.8">
          <stop offset="0" stopColor="#4b6cf0" />
          <stop offset="0.6" stopColor="#7540dc" />
          <stop offset="1" stopColor="#a22de0" />
        </radialGradient>
        <Grad id="fy" stops={[[0, "#fff04a"], [0.6, "#ffd738"], [1, "#ff9a2a"]]} />
      </defs>
      <Tile x={-65} fill="#20123a" />
      <path d="M-8 158Q-10 150 -2 138L8 154Q15 152 22 153Q28 143 40 139Q38 150 42 158Q60 150 74 157Q70 125 100 107C103 128 120 136 132 152L136 144Q142 148 144 158L148 152Q166 178 164 210C161 262 122 297 73 297C22 297 -19 258 -19 207Q-19 180 -8 158Z" fill="url(#fx)" />
      <path d="M74 157C68 128 88 116 100 107C103 130 132 142 146 172C160 206 146 242 120 258C134 230 128 180 74 157Z" fill="url(#fy)" />
      <circle cx="70" cy="201" r="44" fill="url(#fg)" />
      <path d="M42 158Q62 150 84 160Q106 170 112 196Q114 226 92 243Q104 220 96 198Q86 176 58 172Z" fill="#a83be6" opacity="0.6" />
      <path d="M-12 176C6 172 14 178 24 178C44 178 60 180 70 186C64 196 48 196 40 200C28 206 30 224 40 236C10 228 18 196 2 190Q-6 186 -12 176Z" fill="#ffa02c" />
    </DockIcon>
    <DockIcon x={211}>
      <defs>
        <Grad id="zh" stops={[[0, "#e9e9e9"], [0.5, "#a6a6a6"], [1, "#f0f0f0"]]} />
        <Grad id="zr" stops={[[0, "#d8232b"], [0.5, "#b91d22"], [1, "#8c1216"]]} />
      </defs>
      <path d="M349 76L457 125V272L349 322L240 272V125Z" fill="url(#zh)" stroke="#8a8a8a" strokeWidth="3" />
      <path d="M349 78V240L456 126Z" fill="#8b8b8b" opacity="0.4" />
      <path d="M349 78V240L456 270V126Z" fill="#777" opacity="0.4" />
      <path d="M242 271L349 235L456 271L349 320Z" fill="#f2e4e4" opacity="0.7" />
      <path d="M291 135L298 121H402L408 135Z" fill="#ff6a66" />
      <path d="M345 247L368 232H402L408 247Z" fill="#f0413f" />
      <text transform="translate(349 279) scale(0.87 1)" textAnchor="middle" fontFamily="DejaVu Sans" fontWeight="700" fontSize="197" fill="url(#zr)">Z</text>
    </DockIcon>
    <DockIcon x={487}>
      <path d="M519 118Q519 104 533 102L656 94Q668 93 678 100L720 130Q729 137 729 149V288Q729 302 715 304L588 314Q572 315 563 304L526 262Q519 254 519 244Z" fill="#fff" />
      <path d="M528 122Q528 112 538 110L656 102Q665 101 672 106L712 134Q720 140 720 150V286Q720 295 710 296L588 306Q576 307 569 298L534 258Q528 251 528 243Z" fill="#1d1d1d" />
      <path d="M548 122L660 114Q668 113 674 118L694 132Q698 138 690 139L578 147Q570 147 564 142L546 128Q543 123 548 122Z" fill="#fff" />
      <path d="M567 164Q567 156 575 155L700 148Q707 148 707 156V276Q707 284 699 285L576 293Q567 293 567 285Z" fill="#fff" />
      <text transform="translate(638 270) skewY(-4) scale(0.94 1)" textAnchor="middle" fontFamily="Liberation Serif" fontWeight="700" fontSize="150" fill="#1a1a1a" stroke="#1a1a1a" strokeWidth="2">N</text>
    </DockIcon>
    <DockIcon x={763}>
      <Tile x={763} fill="#fcfcfc" />
      <rect x="825" y="168" width="71" height="31" rx="15.500" fill="#36c5f0" />
      <path d="M880 129A16 16 0 0 0 880 160H896V145A16 16 0 0 0 880 129Z" fill="#36c5f0" />
      <rect x="904" y="129" width="31" height="70" rx="15.500" fill="#2eb67d" />
      <path d="M943 199V184A16 16 0 1 1 959 199Z" fill="#2eb67d" />
      <rect x="904" y="207" width="71" height="32" rx="16" fill="#ecb22e" />
      <path d="M904 246H919A16 16 0 1 1 904 262Z" fill="#ecb22e" />
      <rect x="864" y="207" width="32" height="72" rx="16" fill="#e01e5a" />
      <path d="M857 207V223A16 16 0 1 1 841 207Z" fill="#e01e5a" />
    </DockIcon>
    <DockIcon x={-101}>
      <defs>
        <Grad id="mb" stops={[[0, "#1b6cf3"], [1, "#1ac8fd"]]} />
        <Grad id="me" stops={[[0, "#fbfbfb"], [1, "#dcdcdc"]]} />
      </defs>
      <Tile x={-101} fill="url(#mb)" />
      <rect x="-39" y="158" width="150" height="97" rx="8" fill="#0b62c4" opacity="0.45" />
      <rect x="-39" y="156" width="150" height="95" rx="7" fill="url(#me)" />
      <path d="M-36 248L8 203M108 248L64 203" stroke="#a8a8a8" strokeWidth="3" />
      <path d="M-37 159L18 214Q36 232 54 214L109 159" fill="#f4f4f4" stroke="#a8a8a8" strokeWidth="4" />
    </DockIcon>
    <DockIcon x={175}>
      <defs>
        <Grad id="ps" stops={[[0, "#7ba0e0"], [1, "#bcd0f2"]]} />
        <Grad id="pl" stops={[[0, "#3a3a3a"], [1, "#080808"]]} />
        <Grad id="pg" x2={1} y2={0} stops={[[0, "#7d8082"], [0.14, "#c4c7c9"], [0.3, "#f3f4f4"], [0.7, "#e2e4e6"], [0.88, "#a9adb0"], [1, "#707477"]]} />
        <clipPath id="pc"><rect x="222" y="114" width="180" height="180" rx="28" /></clipPath>
      </defs>
      <Tile x={175} fill="#f5f5f5" />
      <g clipPath="url(#pc)">
        <rect x="222" y="114" width="180" height="99" fill="url(#ps)" />
        <rect x="222" y="211" width="180" height="30" fill="#1f2f63" />
        <rect x="222" y="240" width="180" height="60" fill="#a9c6dd" />
        <path d="M222 236Q240 232 250 242L268 250H222Z" fill="#4c4238" />
        <path d="M268 234L300 234L315 244H275Z" fill="#3d3d48" />
        <path d="M222 258Q250 250 268 262T320 262V280Q280 268 250 278T222 276Z" fill="#eef5fa" />
        <path d="M232 294Q240 276 262 284L270 294Z" fill="#5b4634" />
      </g>
      <path d="M318 244L297 306Q296 318 312 319H410Q427 318 425 306L406 244Z" fill="url(#pg)" stroke="#5f6265" strokeWidth="2" />
      <path d="M332 250L322 300H402L392 250Z" fill="#fff" opacity="0.6" />
      <path d="M340 268L356 256L362 266L348 274ZM366 282L384 272L386 284ZM340 286L352 278L358 290ZM366 258L380 254L384 264Z" fill="#6d7780" />
      <path d="M314 212Q362 192 410 212V238Q362 256 314 238Z" fill="url(#pl)" />
      <ellipse cx="362" cy="211" rx="47" ry="9" fill="#2b2b2b" />
    </DockIcon>
    <DockIcon x={451}>
      <defs>
        <Grad id="sr" stops={[[0, "#ff7d57"], [0.45, "#ff5120"], [1, "#df3806"]]} />
        <Grad id="ss" stops={[[0, "#fff"], [1, "#f1e5e2"]]} />
      </defs>
      <path d="M588 94C670 94 698 112 698 204C698 296 670 315 588 315C506 315 477 296 477 204C477 112 506 94 588 94Z" fill="url(#sr)" />
      <text x="588" y="270" textAnchor="middle" fontFamily="Inter" fontWeight="500" fontSize="158" fill="#a32a06" opacity="0.35">S</text>
      <text x="588" y="264" textAnchor="middle" fontFamily="Inter" fontWeight="500" fontSize="158" fill="url(#ss)" stroke="#fff" strokeWidth="1.500">S</text>
    </DockIcon>
    <DockRule />
    <DockIcon x={844.5}>
      <defs>
        <Grad id="tr" x2={1} y2={0} stops={[[0, "#a3a7a9"], [0.12, "#747a7d"], [0.5, "#888d90"], [0.85, "#71777a"], [1, "#a8acae"]]} />
        <Grad id="tt" stops={[[0, "#c6cacc"], [0.3, "#888d90"], [0.8, "#5f6467"], [1, "#9a9ea0"]]} />
      </defs>
      <ellipse cx="983" cy="106" rx="93" ry="22" fill="#3e4143" stroke="#85898b" strokeWidth="3" />
      <path d="M903 114L910 98L928 87L944 86L952 78L968 88L984 90L996 80L1012 86L1036 86L1052 98L1062 116L1040 128L960 134L922 128Z" fill="#e4e4e4" />
      <path d="M914 104L930 98L926 112ZM940 92L958 90L948 98ZM1036 98L1052 104L1042 112ZM1030 116L1046 118L1034 126Z" fill="#8a8a8a" />
      <path d="M930 112L950 108L962 118L952 130L936 126Z" fill="#3a302c" />
      <path d="M1000 98L1026 94L1034 108L1028 120L1006 122L996 110Z" fill="#5a4048" />
      <path d="M952 101L976 99L980 106L958 110Z" fill="#35c26a" />
      <path d="M954 104L972 104L968 109Z" fill="#3fb4d8" />
      <path d="M978 112L992 106L1002 130L970 132Z" fill="#f7f7f7" />
      <path d="M978 128L990 110L988 130Z" fill="#c8472f" />
      <path d="M1006 102L1020 98L1030 110L1016 116Z" fill="#3b5fb0" />
      <path d="M1008 112L1018 108L1020 118Z" fill="#d9793a" />
      <path d="M890 106Q900 132 983 133Q1068 132 1077 106L1056 298Q1052 321 983 321Q916 321 912 298Z" fill="url(#tr)" />
      <path d="M890 106Q900 132 983 133Q1068 132 1077 106L1056 298Q1052 321 983 321Q916 321 912 298Z" fill="url(#tt)" opacity="0.45" />
      <path d="M985 172Q1030 170 1044 140Q1010 160 985 172Z" fill="#c3c7c9" opacity="0.5" />
      <path d="M914 290Q940 312 983 312T1055 290L1054 300Q1050 320 983 320T913 300Z" fill="#b9bdbf" opacity="0.5" />
    </DockIcon>
  </DockBar>
);

export default function App() {
  return (
    <Desktop>
      <Global />
      <TopBar />
      <Shortcuts>
        {SHORTCUTS.map(([t, emblem, ls]) => (
          <Shortcut key={t}>
            <Folder w={88} h={73.5} id={`d${t[0]}`} emblem={emblem} light={!!emblem} />
            <ShortcutLabel $size={24} $weight={700} $ls={ls}>{t}</ShortcutLabel>
            <AliasBadge width="14" height="18" viewBox="0 0 14 18">
              <path d="M3 1.500H13V11L10.200 8.500Q6 11.500 4 16.500L1.500 16.800Q2 9 6 4.800Z" fill="#222" stroke="#fff" strokeWidth="1.200" strokeLinejoin="round" />
            </AliasBadge>
          </Shortcut>
        ))}
      </Shortcuts>
      <EditorWindow />
      <Dock />
    </Desktop>
  );
}
